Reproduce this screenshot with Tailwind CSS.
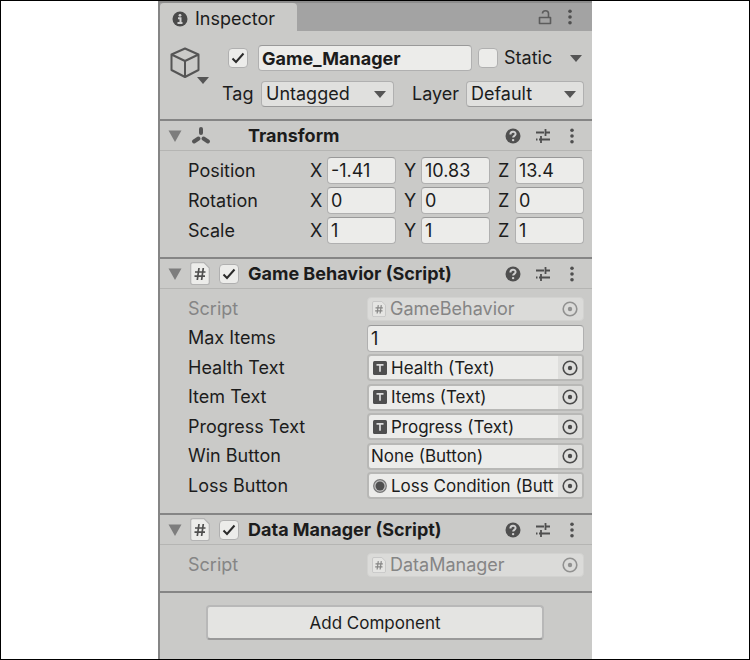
<!DOCTYPE html>
<html lang="en">
<head>
<meta charset="utf-8">
<meta name="viewport" content="width=device-width, initial-scale=1">
<title>Inspector</title>
<script src="https://cdn.jsdelivr.net/npm/@tailwindcss/browser@4"></script>
</head>
<body class="bg-white">
<svg class="hidden" aria-hidden="true">
  <symbol id="fold" viewBox="0 0 14 12"><path d="M.5.5h13L7 12z" fill="#7d7d7d"/></symbol>
  <symbol id="caret" viewBox="0 0 12 7"><path d="M0 0h12L6 7z" fill="#555"/></symbol>
  <symbol id="help" viewBox="0 0 16 16"><circle cx="8" cy="8" r="7.5" fill="#4f4f4f"/><path d="M5.400 6.500C5.300 2.800 10.700 2.800 10.600 6.100c0 1.700-2.500 1.800-2.500 3.500" fill="none" stroke="#d0d0d0" stroke-width="2"/><circle cx="8.100" cy="12.100" r="1.200" fill="#d0d0d0"/></symbol>
  <symbol id="preset" viewBox="0 0 16 16"><path d="M1 4.500h8M10.500 4.500H15M10.500 1v7M1 11.500h1.500M4 11.500h2M6 8v7M6 11.500h9" fill="none" stroke="#4f4f4f" stroke-width="1.800"/></symbol>
  <symbol id="dots" viewBox="0 0 4 16"><circle cx="2" cy="2.300" r="1.800" fill="#4f4f4f"/><circle cx="2" cy="8" r="1.800" fill="#4f4f4f"/><circle cx="2" cy="13.700" r="1.800" fill="#4f4f4f"/></symbol>
  <symbol id="check" viewBox="0 0 14 12"><path d="M1.500 6.500l3.500 3.500L12.500 1.500" fill="none" stroke="#2a2a2a" stroke-width="2"/></symbol>
  <symbol id="script" viewBox="0 0 20 23"><path d="M2.500.7h11.500l5.300 5.300v14.500a2 2 0 0 1-2 2H2.700a2 2 0 0 1-2-2V2.700a2 2 0 0 1 2-2z" fill="#ececea" stroke="#b4b4b4" stroke-width="1.200"/><path d="M9 6l-1.700 12M13.300 6l-1.700 12M5 10h10.500M4.500 14.200H15" fill="none" stroke="#4f4f4f" stroke-width="1.700"/></symbol>
  <symbol id="target" viewBox="0 0 16 16"><circle cx="8" cy="8" r="6.800" fill="none" stroke="#4a4a4a" stroke-width="1.600"/><circle cx="8" cy="8" r="2.200" fill="#4a4a4a"/></symbol>
  <symbol id="text" viewBox="0 0 14 14"><rect width="14" height="14" rx="1.500" fill="#4f4f4f"/><path d="M3.500 3.800h7M7 3.800v7" stroke="#ddd" stroke-width="1.700"/></symbol>
  <symbol id="knob" viewBox="0 0 14 14"><circle cx="7" cy="7" r="6.300" fill="#c4c4c4" stroke="#777" stroke-width="1.200"/><circle cx="7" cy="7" r="4.500" fill="#4f4f4f"/></symbol>
</svg>
<main class="min-h-screen border border-black text-lg/6 text-[#1c1c1c] font-['Inter','Liberation_Sans',sans-serif]">
<div class="mx-auto flex min-h-[658px] w-full max-w-[434px] flex-col border-l-2 border-[#858585] bg-[#cacac8]">

  <header class="flex h-[30px] items-stretch justify-between border-t-2 border-[#8d8d8d] bg-[#a3a3a3]">
    <h1 class="flex w-[137px] items-center gap-[7px] rounded-t-sm bg-[#cacac8] pl-3 pt-1">
      <svg class="size-4" viewBox="0 0 16 16"><circle cx="8" cy="8" r="7.500" fill="#4a4a4a"/><circle cx="8" cy="4.300" r="1.400" fill="#d0d0d0"/><path d="M6 7.200h2.500v4.500M5.500 12h5" fill="none" stroke="#d0d0d0" stroke-width="2"/></svg>
      Inspector
    </h1>
    <div class="flex items-center gap-4 pr-5">
      <button aria-label="Lock"><svg class="h-4 w-3.5" viewBox="0 0 14 16"><path d="M1.500 8.500h11v6h-11zM4.500 4.500C4.500.8 10.500.8 10.500 4.500V8" fill="none" stroke="#5c5c5c" stroke-width="1.600" stroke-linejoin="round"/></svg></button>
      <button aria-label="Menu"><svg class="h-4 w-1"><use href="#dots"/></svg></button>
    </div>
  </header>

  <section class="flex h-[88px] gap-3 px-2 pt-3.5" aria-label="Object">
    <div class="relative w-[39px] shrink-0">
      <svg class="mt-0.5 ml-0.5 h-8 w-[30px]" viewBox="0 0 30 32"><path d="M15 1.500l13.500 6v15.500L15 30 1.500 23V7.500zM1.500 7.500L15 14l13.500-6.500M15 14v16" fill="none" stroke="#555" stroke-width="2" stroke-linejoin="round"/></svg>
      <svg class="absolute -right-0.5 top-8 h-[7px] w-3"><use href="#caret"/></svg>
    </div>
    <div class="flex min-w-0 grow flex-col gap-2.5">
      <div class="flex items-center pl-[9px]">
        <label class="relative flex size-5 shrink-0 items-center justify-center"><input type="checkbox" checked aria-label="Active" class="absolute inset-0 appearance-none rounded-sm border border-[#b0b0b0] bg-[#ececea]"><svg class="relative h-3 w-3.5"><use href="#check"/></svg></label>
        <input aria-label="Name" value="Game_Manager" class="ml-2.5 h-[26px] w-0 min-w-0 grow rounded border border-[#b0b0b0] border-t-[#999] bg-[#ececea] px-[3px] font-bold">
        <input id="static" type="checkbox" class="ml-1.5 size-5 appearance-none rounded-sm border border-[#b0b0b0] bg-[#ececea]">
        <label for="static" class="ml-1.5 w-[66px]">Static</label>
        <button aria-label="Static options" class="mr-0.5"><svg class="h-[7px] w-3"><use href="#caret"/></svg></button>
      </div>
      <div class="flex items-center pl-[3px]">
        <label for="tag" class="w-[39px]">Tag</label>
        <div class="relative grow"><select id="tag" class="h-[26px] w-full appearance-none rounded border border-[#b0b0b0] border-b-[#999] bg-[#e0e0de] pl-1"><option>Untagged</option></select><svg class="pointer-events-none absolute right-2 top-2.5 h-[7px] w-3"><use href="#caret"/></svg></div>
        <label for="layer" class="ml-[18px] w-[54px]">Layer</label>
        <div class="relative w-[118px]"><select id="layer" class="h-[26px] w-full appearance-none rounded border border-[#b0b0b0] border-b-[#999] bg-[#e0e0de] pl-1"><option>Default</option></select><svg class="pointer-events-none absolute right-2 top-2.5 h-[7px] w-3"><use href="#caret"/></svg></div>
      </div>
    </div>
  </section>

  <section class="h-[138px] border-t-2 border-[#858585]">
    <header class="flex h-[30px] items-center border-b border-[#b5b5b3] pr-[18px] pl-2">
      <button aria-label="Collapse"><svg class="h-3 w-3.5"><use href="#fold"/></svg></button>
      <svg class="ml-[9px] size-5" viewBox="0 0 20 20"><g stroke="#555" stroke-width="4" stroke-linecap="round"><path d="M10 3v4M7.500 12.500L3 15.500M12.500 12.500l4.500 3"/></g></svg>
      <h2 class="ml-[37px] grow font-bold">Transform</h2>
      <div class="flex items-center"><button aria-label="Help"><svg class="size-4"><use href="#help"/></svg></button><button aria-label="Presets" class="mr-[19px] ml-3.5"><svg class="size-4"><use href="#preset"/></svg></button><button aria-label="Menu"><svg class="h-4 w-1"><use href="#dots"/></svg></button></div>
    </header>
    <div id="transform" class="flex flex-col gap-[3px] pt-1.5 pr-2 pl-7"></div>
  </section>

  <section class="h-[256px] border-t-2 border-[#858585]">
    <header class="flex h-[30px] items-center border-b border-[#b5b5b3] pr-[18px] pl-2">
      <button aria-label="Collapse"><svg class="h-3 w-3.5"><use href="#fold"/></svg></button>
      <svg class="ml-2 h-[23px] w-5"><use href="#script"/></svg>
      <label class="relative ml-[9px] flex size-5 items-center justify-center"><input type="checkbox" checked aria-label="Enable Game Behavior" class="absolute inset-0 appearance-none rounded-sm border border-[#b0b0b0] bg-[#ececea]"><svg class="relative h-3 w-3.5"><use href="#check"/></svg></label>
      <h2 class="ml-[9px] grow font-bold">Game Behavior (Script)</h2>
      <div class="flex items-center"><button aria-label="Help"><svg class="size-4"><use href="#help"/></svg></button><button aria-label="Presets" class="mr-[19px] ml-3.5"><svg class="size-4"><use href="#preset"/></svg></button><button aria-label="Menu"><svg class="h-4 w-1"><use href="#dots"/></svg></button></div>
    </header>
    <div id="behavior" class="mt-1.5 flex min-h-[204px] flex-col justify-between pr-2 pl-7"></div>
  </section>

  <section class="h-[78px] border-t-2 border-[#858585]">
    <header class="flex h-[30px] items-center border-b border-[#b5b5b3] pr-[18px] pl-2">
      <button aria-label="Collapse"><svg class="h-3 w-3.5"><use href="#fold"/></svg></button>
      <svg class="ml-2 h-[23px] w-5"><use href="#script"/></svg>
      <label class="relative ml-[9px] flex size-5 items-center justify-center"><input type="checkbox" checked aria-label="Enable Data Manager" class="absolute inset-0 appearance-none rounded-sm border border-[#b0b0b0] bg-[#ececea]"><svg class="relative h-3 w-3.5"><use href="#check"/></svg></label>
      <h2 class="ml-[9px] grow font-bold">Data Manager (Script)</h2>
      <div class="flex items-center"><button aria-label="Help"><svg class="size-4"><use href="#help"/></svg></button><button aria-label="Presets" class="mr-[19px] ml-3.5"><svg class="size-4"><use href="#preset"/></svg></button><button aria-label="Menu"><svg class="h-4 w-1"><use href="#dots"/></svg></button></div>
    </header>
    <div id="data" class="mt-1.5 pr-2 pl-7"></div>
  </section>

  <footer class="grow border-t-2 border-[#858585] pt-3 pr-12 pl-[46px]">
    <button class="h-[35px] w-full rounded border-2 border-[#b8b8b8] border-b-[#999] bg-[#e4e4e2] text-[17px]">Add Component</button>
  </footer>
</div>
</main>
<script>
const transform = [["Position","-1.41","10.83","13.4"],["Rotation","0","0","0"],["Scale","1","1","1"]];
document.getElementById("transform").innerHTML = transform.map(([name, ...v]) => `
  <div class="flex h-[27px] items-center" role="group" aria-label="${name}">
    <span class="w-[122px] shrink-0">${name}</span>
    <div class="grid grow grid-cols-3 gap-2">${["X","Y","Z"].map((a, i) => `
      <label class="flex min-w-0 items-center"><span class="w-[17px] shrink-0">${a}</span><input value="${v[i]}" aria-label="${name} ${a}" class="h-[27px] w-0 min-w-0 grow rounded border border-[#b0b0b0] border-t-[#999] bg-[#ececea] px-[3px]"></label>`).join("")}
    </div>
  </div>`).join("");

const picker = (name) => `<button aria-label="Select ${name}" class="flex h-full w-6 shrink-0 items-center justify-center bg-[#dededc]"><svg class="size-4"><use href="#target"/></svg></button>`;
const row = (name, value, kind) => {
  const id = (name + value).replace(/\W/g, "");
  if (kind === "number") return `
  <div class="flex h-[27px] items-center"><label for="${id}" class="w-[179px] shrink-0">${name}</label><input id="${id}" value="${value}" class="h-[27px] w-0 min-w-0 grow rounded border border-[#b0b0b0] border-t-[#999] bg-[#ececea] px-[3px]"></div>`;
  if (kind === "script") return `
  <div class="flex h-[27px] items-center text-[#858585]"><span class="w-[179px] shrink-0">${name}</span><div class="flex h-6 min-w-0 grow items-center rounded border border-[#d2d2d0] bg-[#dbdbd9] pl-1"><svg class="h-4 w-3.5 shrink-0 opacity-60" viewBox="0 0 20 23"><use href="#script"/></svg><span class="ml-1 grow">${value}</span><svg class="mr-[5px] size-4 opacity-50"><use href="#target"/></svg></div></div>`;
  return `
  <div class="flex h-[27px] items-center"><span class="w-[179px] shrink-0">${name}</span><div class="flex h-[27px] min-w-0 grow items-center overflow-hidden rounded border-2 border-[#b8b8b6] bg-[#ececea] text-[17px] ${kind ? "pl-1" : "pl-0.5"}">${kind ? `<svg class="mr-1 size-3.5 shrink-0"><use href="#${kind}"/></svg>` : ""}<span class="min-w-0 grow whitespace-nowrap">${value}</span>${picker(name)}</div></div>`;
};
document.getElementById("behavior").innerHTML = [
  ["Script","GameBehavior","script"],["Max Items","1","number"],["Health Text","Health (Text)","text"],
  ["Item Text","Items (Text)","text"],["Progress Text","Progress (Text)","text"],
  ["Win Button","None (Button)",""],["Loss Button","Loss Condition (Butt","knob"]
].map((r) => row(...r)).join("");
document.getElementById("data").innerHTML = row("Script", "DataManager", "script");
</script>
</body>
</html>
